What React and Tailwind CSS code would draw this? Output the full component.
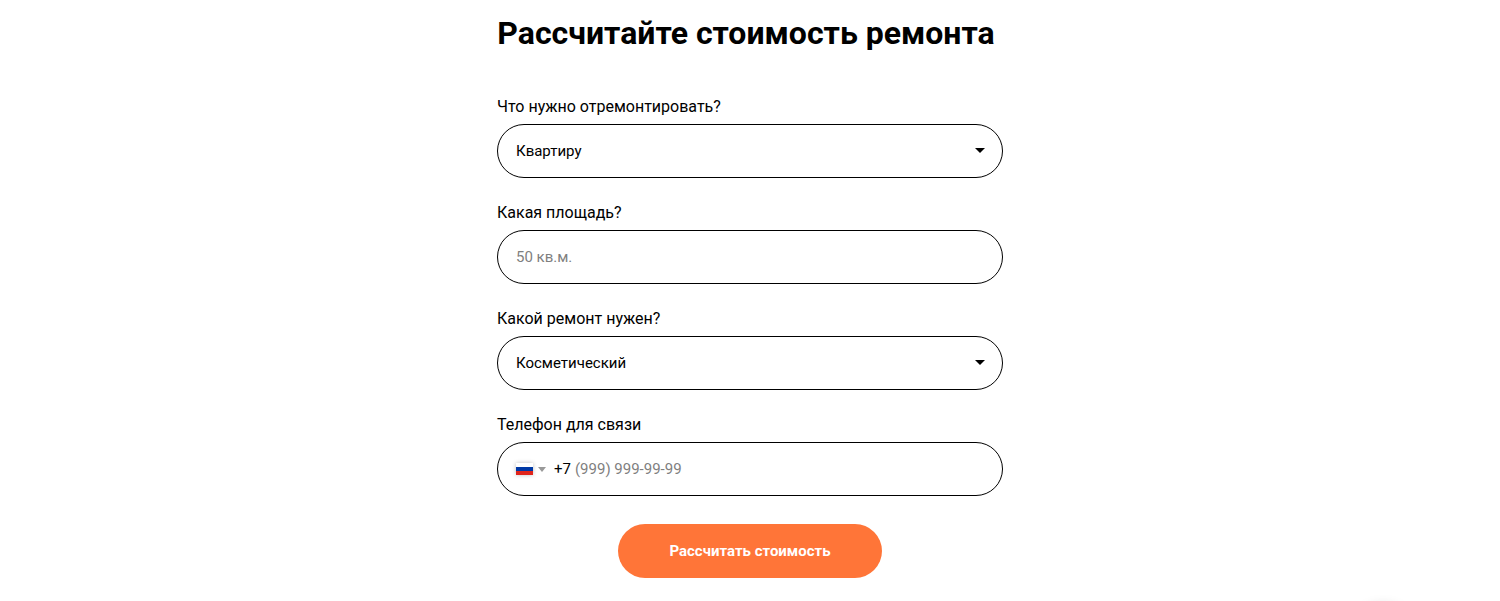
import React, { useState } from "react";

const objectTypes = ["Квартиру", "Дом", "Офис"];
const repairTypes = ["Косметический", "Капитальный", "Дизайнерский"];

const fieldClass =
  "block w-full h-[54px] rounded-full border border-black bg-white px-[18px] text-[15px] text-black placeholder:text-[#7f7f7f] focus:outline-none";

function Field({ id, label, children }) {
  return (
    <div>
      <label
        htmlFor={id}
        className="block mb-0.5 text-base leading-[30px] text-black"
      >
        {label}
      </label>
      {children}
    </div>
  );
}

function SelectField({ id, label, options, value, onChange }) {
  return (
    <Field id={id} label={label}>
      <div className="relative">
        <select
          id={id}
          value={value}
          onChange={(e) => onChange(e.target.value)}
          className={`${fieldClass} appearance-none cursor-pointer`}
        >
          {options.map((option) => (
            <option key={option}>{option}</option>
          ))}
        </select>
        <span className="absolute right-[18px] top-6 border-x-5 border-t-5 border-x-transparent border-t-black pointer-events-none" />
      </div>
    </Field>
  );
}

export default function App() {
  const [objectType, setObjectType] = useState(objectTypes[0]);
  const [area, setArea] = useState("");
  const [repairType, setRepairType] = useState(repairTypes[0]);
  const [phone, setPhone] = useState("");

  return (
    <main className="bg-white pt-3 pb-5 font-[Roboto,sans-serif] text-black">
      <h1 className="pr-2 text-center text-[32px] leading-[42px] font-bold">
        Рассчитайте стоимость ремонта
      </h1>

      <form
        onSubmit={(e) => e.preventDefault()}
        className="mx-auto mt-[38px] max-w-[506px]"
      >
        <div className="flex flex-col gap-5">
          <SelectField
            id="object"
            label="Что нужно отремонтировать?"
            options={objectTypes}
            value={objectType}
            onChange={setObjectType}
          />

          <Field id="area" label="Какая площадь?">
            <input
              id="area"
              type="text"
              placeholder="50 кв.м."
              value={area}
              onChange={(e) => setArea(e.target.value)}
              className={fieldClass}
            />
          </Field>

          <SelectField
            id="repair"
            label="Какой ремонт нужен?"
            options={repairTypes}
            value={repairType}
            onChange={setRepairType}
          />

          {/* PHONE */}
          <Field id="phone" label="Телефон для связи">
            <div className="flex h-[54px] items-center rounded-full border border-black px-[18px]">
              <button
                type="button"
                aria-label="Россия"
                className="flex items-center gap-[5px] cursor-pointer"
              >
                <span className="flex h-3 w-[17px] flex-col shadow-[0_0_4px_rgba(0,0,0,0.25)]">
                  <span className="flex-1 bg-white" />
                  <span className="flex-1 bg-[#0039a6]" />
                  <span className="flex-1 bg-[#e0241b]" />
                </span>
                <span className="border-x-4 border-t-5 border-x-transparent border-t-[#999999]" />
              </button>
              <span className="ml-2 text-[15px]">+7</span>
              <input
                id="phone"
                type="tel"
                placeholder="(999) 999-99-99"
                value={phone}
                onChange={(e) => setPhone(e.target.value)}
                className="ml-1 min-w-0 flex-1 bg-transparent text-[15px] placeholder:text-[#7f7f7f] focus:outline-none"
              />
            </div>
          </Field>
        </div>

        <button
          type="submit"
          className="mx-auto mt-7 block h-[54px] w-[264px] rounded-full bg-[#ff7538] text-[15px] font-bold text-white cursor-pointer"
        >
          Рассчитать стоимость
        </button>
      </form>

      {/* FLOATING WIDGET, tucked under the bottom edge */}
      <span className="fixed right-[87px] -bottom-16 size-[60px] rounded-full bg-white shadow-[0_0_12px_rgba(0,0,0,0.15)]" />
    </main>
  );
}
